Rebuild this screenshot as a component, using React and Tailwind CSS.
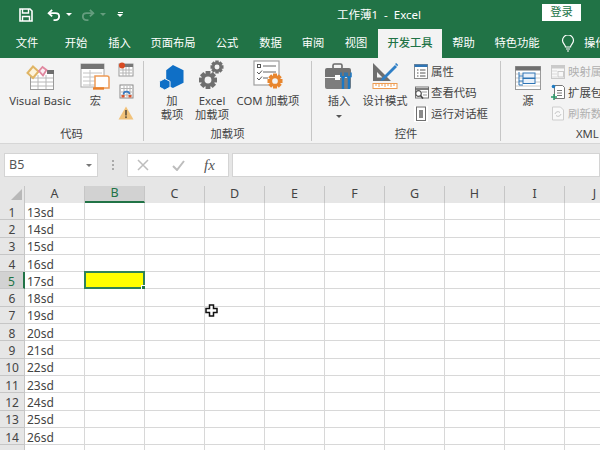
import React from "react";

const F = { fontFamily: '"Noto Sans","Noto Sans CJK SC",sans-serif' };

const Save = () => (
  <svg width="14" height="14" viewBox="0 0 14 14" fill="none" stroke="#fff" strokeWidth="1.6">
    <path d="M1 1h10l2 2v10H1z" />
    <path d="M3.5 1v4h6V1" strokeWidth="1.4" />
    <path d="M3.5 13V8.5h7V13" strokeWidth="1.4" />
  </svg>
);
const Undo = ({ o = 1, flip = false }) => (
  <svg width="14" height="14" viewBox="0 0 15 14" fill="none" stroke="#fff" strokeWidth="2" opacity={o} style={flip ? { transform: "scaleX(-1)" } : undefined}>
    <path d="M5.5 1.5 1.8 5l3.7 3.5" />
    <path d="M2 5h7c2.4 0 4 1.6 4 3.6S11.4 12.5 9 12.5H7" />
  </svg>
);
const Caret = ({ o = 1 }) => <div className="w-0 h-0 border-x-[3px] border-x-transparent border-t-[3px] border-t-white" style={{ opacity: o }} />;

const VB = () => (
  <svg width="28" height="25" viewBox="0 0 28 25">
    <rect x="4.500" y="5.500" width="23" height="19" fill="#fff" stroke="#9a9a9a" />
    <rect x="21" y="5" width="7" height="4" fill="#6e6e6e" />
    <path d="M5 13h22M5 17h22M5 21h22M12 10v14M20 10v14" stroke="#b8b8b8" />
    <path d="M1.500 8 7 1.500l5.500 5L7 13z" fill="#fdf3dc" stroke="#e0b565" strokeWidth="2" />
    <path d="M13 6l3.500-4 4 3-3.500 5.500z" fill="#fbeef2" stroke="#e0879f" strokeWidth="1.800" />
  </svg>
);
const Macro = () => (
  <svg width="32" height="27" viewBox="0 0 32 27">
    <rect x="1" y="1" width="23" height="23" fill="#fff" stroke="#a8a8a8" />
    <rect x="1" y="1" width="23" height="5" fill="#747474" />
    <path d="M3 10h19M3 14h19M3 18h19M3 22h15M10 7v16" stroke="#c4c4c4" />
    <path d="M15 13h12c1 0 2 1 2 2v10h-14z" fill="#fff" stroke="#ee9b55" strokeWidth="1.5" />
    <path d="M13 25.5h11" stroke="#e97f2a" strokeWidth="2.4" />
  </svg>
);
const RecMacro = () => (
  <svg width="16" height="15" viewBox="0 0 16 15">
    <rect x="1" y="2" width="14" height="12" fill="#fff" stroke="#9a9a9a" />
    <rect x="5" y="2" width="10" height="3" fill="#777" />
    <path d="M2 8h12M2 11h12M5 5v9M8 5v9M11 5v9" stroke="#b5b5b5" />
    <circle cx="4" cy="3.5" r="3" fill="#d84a22" />
  </svg>
);
const RefMacro = () => (
  <svg width="15" height="15" viewBox="0 0 15 15">
    <rect x="1" y="1" width="13" height="13" fill="#fff" stroke="#8a8a8a" />
    <path d="M2 4.500h11M2 8h11M2 11h11M5 2v11M8 2v11M11 2v11" stroke="#b5b5b5" />
    <path d="M4.500 10.500C4.500 7 10 6.500 10.500 10" fill="none" stroke="#3779c0" strokeWidth="1.6" />
    <rect x="2.500" y="11" width="3" height="2.500" fill="#d9552d" />
    <rect x="9.500" y="11" width="3" height="2.500" fill="#d9552d" />
  </svg>
);
const Warn = () => (
  <svg width="16" height="14" viewBox="0 0 16 14">
    <path d="M8 .5 15.500 13.500H.5z" fill="#f1c27a" />
    <rect x="7.100" y="4" width="1.800" height="5.500" fill="#6b5a42" />
    <rect x="7.100" y="10.300" width="1.800" height="1.800" fill="#6b5a42" />
  </svg>
);
const Addin = () => (
  <svg width="25" height="25" viewBox="0 0 26 26" style={{ marginRight: 2 }}>
    <path d="M14.500 0 25.500 5.500v13L14.500 24 7.500 20.500V5.500z" fill="#0f6fc6" />
    <path d="M6 14.200 11.500 17v6L6 26 .5 23v-6z" fill="#0f6fc6" stroke="#f3f3f3" strokeWidth="1" />
  </svg>
);
const Gear = ({ x, y, r, c, hole = "#f3f3f3" }) => {
  const teeth = [0, 45, 90, 135];
  return (
    <g transform={`translate(${x} ${y})`}>
      {teeth.map((a) => (
        <rect key={a} x={-r * 0.27} y={-r} width={r * 0.54} height={r * 2} fill={c} transform={`rotate(${a})`} />
      ))}
      <circle r={r * 0.76} fill={c} />
      <circle r={r * 0.38} fill={hole} />
    </g>
  );
};
const Gears = () => (
  <svg width="26" height="30" viewBox="0 0 26 30">
    <Gear x={18} y={7} r={6.5} c="#6f6f6f" />
    <Gear x={9} y={20} r={9} c="#6f6f6f" />
  </svg>
);
const Com = () => (
  <svg width="31" height="30" viewBox="0 0 31 30">
    <rect x="1" y="1" width="25" height="24" fill="#fff" stroke="#a0a0a0" strokeWidth="1.2" />
    <rect x="4.500" y="4.500" width="3" height="3" fill="none" stroke="#555" />
    <path d="M10 6h13M10 12h13M10 18h5" stroke="#666" />
    <path d="M4 12l2 2 3-3.500M4 18l2 2 3-3.500" fill="none" stroke="#555" />
    <Gear x={22} y={21} r={7.5} c="#e8862e" />
  </svg>
);
const Tool = () => (
  <svg width="30" height="27" viewBox="0 0 30 27">
    <rect x="9" y="1" width="9" height="5" rx="1.5" fill="none" stroke="#6b6b6b" strokeWidth="1.6" />
    <path d="M1 7a2 2 0 0 1 2-2h22a2 2 0 0 1 2 2v7H1z" fill="#737373" />
    <path d="M1 15h26v9a2 2 0 0 1-2 2H3a2 2 0 0 1-2-2z" fill="#7d7d7d" />
    <rect x="11" y="12" width="5" height="5" fill="#fff" />
    <path d="M19 13v13M25 13v13" stroke="#1b78c4" strokeWidth="2.4" />
    <path d="M17 9.500v4l2 1.500 2-1.500v-4M23 9.500v4l2 1.500 2-1.500v-4" fill="none" stroke="#1b78c4" strokeWidth="1.5" />
  </svg>
);
const Design = () => (
  <svg width="29" height="28" viewBox="1 0 29 28">
    <path d="M3 1v18h18zM7 10v5.500h5.500z" fill="#6e6e6e" fillRule="evenodd" />
    <path d="M12 16 25 3l2 2L14 18l-3.500 1z" fill="#2f7fc6" />
    <path d="M25 2l1.200-1 2 2-1 1.200z" fill="#2f7fc6" />
    <rect x="3" y="21.500" width="24" height="5" fill="#fff" stroke="#ee9b50" />
    <path d="M6 22v2M9 22v3M12 22v2M15 22v3M18 22v2M21 22v3M24 22v2" stroke="#ee9b50" />
  </svg>
);
const Prop = () => (
  <svg width="14" height="15" viewBox="0 0 14 15">
    <rect x=".5" y=".5" width="13" height="14" fill="#fff" stroke="#8a8a8a" />
    <rect x=".5" y=".5" width="13" height="2.500" fill="#2f75b5" />
    <path d="M3 6h1.500M6 6h5.500M3 9h1.500M6 9h5.500M3 12h1.500M6 12h5.500" stroke="#555" />
  </svg>
);
const ViewCode = () => (
  <svg width="15" height="14" viewBox="0 0 15 14">
    <rect x="1.500" y="1" width="13" height="11" fill="#fff" stroke="#777" />
    <path d="M1.500 3h13" stroke="#555" strokeWidth="1.500" />
    <path d="M8 6h5M9 9h4" stroke="#999" />
    <circle cx="4.500" cy="7.500" r="2.800" fill="#fff" stroke="#555" strokeWidth="1.200" />
    <path d="M6.500 9.500 9 12.500" stroke="#444" strokeWidth="1.500" />
  </svg>
);
const RunDlg = () => (
  <svg width="14" height="16" viewBox="0 0 14 16">
    <rect width="14" height="16" fill="#fff" />
    <rect x="2.500" y="1" width="9" height="13.500" fill="#fff" stroke="#6f6f6f" />
    <rect x="5" y="4" width="4" height="8" fill="#8a8a8a" />
  </svg>
);
const Source = () => (
  <svg width="26" height="24" viewBox="0 0 26 24">
    <rect x=".5" y=".5" width="25" height="23" fill="#fff" stroke="#9a9a9a" />
    <rect x=".5" y=".5" width="25" height="4" fill="#6f6f6f" />
    <path d="M1 8h24M1 12h24M1 16h24M1 20h24" stroke="#c8c8c8" />
    <path d="M4 6v13h4M4 10h4M4 15h4" fill="none" stroke="#2f75b5" />
    <rect x="8" y="7" width="12" height="5" fill="#e9f1fa" stroke="#2f75b5" />
    <rect x="8" y="12.500" width="12" height="5" fill="#e9f1fa" stroke="#2f75b5" />
  </svg>
);
const MapProp = () => (
  <svg width="14" height="14" viewBox="0 0 14 14" opacity=".45">
    <rect x=".5" y=".5" width="13" height="13" fill="#fff" stroke="#999" />
    <rect x=".5" y=".5" width="13" height="3" fill="#999" />
    <path d="M1 6h5M1 9h5M1 12h5" stroke="#bbb" />
    <rect x="7" y="6.500" width="5.500" height="5.500" fill="#fff" stroke="#999" />
  </svg>
);
const Expand = () => (
  <svg width="15" height="17" viewBox="0 0 15 17">
    <path d="M3.500 1.500h8l2 2v11h-10z" fill="#fff" stroke="#777" />
    <path d="M6 6.500h5M6 9h5M6 11.500h5" stroke="#777" />
    <circle cx="2.500" cy="2.500" r="1.800" fill="#1f7bc2" />
    <path d="M3 10v6M0 13h6" stroke="#2b9a6b" strokeWidth="1.500" />
  </svg>
);
const Refresh = () => (
  <svg width="14" height="15" viewBox="0 0 14 15" opacity=".5">
    <path d="M1.500 1h8l3 3v10h-11z" fill="#fff" stroke="#aaa" />
    <path d="M4 8a3 3 0 0 1 5-1.500M10 8a3 3 0 0 1-5 1.500" fill="none" stroke="#999" />
  </svg>
);
const Bulb = () => (
  <svg width="14" height="18" viewBox="0 0 14 18" fill="none" stroke="#fff" strokeWidth="1.200">
    <path d="M4.500 12c0-2-3-3.500-3-6.500a5.500 5.500 0 0 1 11 0c0 3-3 4.500-3 6.500z" />
    <path d="M5 14h4M6 16h2" />
  </svg>
);

const Tab = ({ w, children, active }) => (
  <div
    className={`flex items-center justify-center shrink-0 h-full text-[11.300px] ${active ? "bg-[#f3f3f3] text-[#217346] font-medium" : "text-white"}`}
    style={{ width: w }}
  >
    {children}
  </div>
);

const Big = ({ w, icon, children, h = 29 }) => (
  <div className="flex flex-col items-center shrink-0 text-[11.300px] leading-[14px] text-[#444] text-center" style={{ width: w }}>
    <div className="flex items-end justify-center mb-[4px]" style={{ height: h }}>{icon}</div>
    {children}
  </div>
);

const Group = ({ w, label, children }) => (
  <div className="flex flex-col shrink-0 h-[80px] border-r border-[#c6c6c6]" style={{ width: w }}>
    <div className="flex flex-1 min-h-0">{children}</div>
    <div className="text-[11.300px] leading-[14px] text-[#444] text-center">{label}</div>
  </div>
);

const SmallRow = ({ icon, children, muted }) => (
  <div className={`flex items-center gap-[2px] h-[21px] text-[11.400px] whitespace-nowrap ${muted ? "text-[#b0b0b0]" : "text-[#444]"}`}>
    <div className="w-[16px] flex justify-center shrink-0">{icon}</div>
    {children}
  </div>
);

const columns = ["A", "B", "C", "D", "E", "F", "G", "H", "I", "J"];
const rows = ["13sd", "14sd", "15sd", "16sd", "17sd", "18sd", "19sd", "20sd", "21sd", "22sd", "23sd", "24sd", "25sd", "26sd", ""];

export default function App() {
  return (
    <div className="relative w-[600px] h-[450px] overflow-hidden bg-[#e6e6e6] select-none" style={F}>
      {/* Title bar */}
      <div className="flex items-center h-[29px] bg-[#217346] text-white">
        <div className="ml-[19px] w-[28px] shrink-0"><Save /></div>
        <Undo />
        <div className="ml-[5px] mr-[9px]"><Caret /></div>
        <Undo o={0.3} flip />
        <div className="ml-[5px] mr-[11px]"><Caret o={0.3} /></div>
        <div className="flex flex-col items-center gap-[1px] w-[6px]">
          <div className="w-[5px] h-px bg-white" />
          <Caret />
        </div>
        <div className="ml-[214px] w-[205px] text-[11.500px] whitespace-nowrap">工作薄1 &nbsp;-&nbsp; Excel</div>
        <div className="flex items-center justify-center w-[39px] h-[17px] bg-white text-[#217346] text-[11.300px] -mt-[5px]">登录</div>
      </div>

      {/* Tabs */}
      <div className="flex items-center h-[29px] bg-[#217346] overflow-hidden">
        <Tab w={54}>文件</Tab>
        <Tab w={44}>开始</Tab>
        <Tab w={43}>插入</Tab>
        <Tab w={64}>页面布局</Tab>
        <Tab w={44}>公式</Tab>
        <Tab w={43}>数据</Tab>
        <Tab w={42}>审阅</Tab>
        <Tab w={44}>视图</Tab>
        <Tab w={64} active>开发工具</Tab>
        <Tab w={43}>帮助</Tab>
        <Tab w={64}>特色功能</Tab>
        <div className="ml-[12px] mr-[9px] shrink-0"><Bulb /></div>
        <div className="text-white text-[11.300px] whitespace-nowrap">操作</div>
      </div>

      {/* Ribbon */}
      <div className="flex items-start h-[86px] pt-[3px] bg-[#f3f3f3] border-b border-[#d6d6d6] overflow-hidden">
        <Group w={144} label="代码">
          <div className="w-[3px]" />
          <Big w={74} icon={<VB />}>Visual Basic</Big>
          <Big w={37} icon={<Macro />}>宏</Big>
          <div className="flex flex-col items-center justify-between w-[20px] h-[58px] ml-[2px] mt-[1px]">
            <RecMacro />
            <RefMacro />
            <Warn />
          </div>
        </Group>
        <Group w={168} label="加载项">
          <div className="w-[10px]" />
          <Big w={36} icon={<Addin />}>加<br />载项</Big>
          <Big w={44} icon={<Gears />}>Excel<br />加载项</Big>
          <Big w={68} icon={<Com />}>COM 加载项</Big>
        </Group>
        <Group w={189} label="控件">
          <div className="w-[10px]" />
          <Big w={34} icon={<Tool />}>
            插入
            <div className="mt-[7px] w-0 h-0 border-x-[3px] border-x-transparent border-t-[3px] border-t-[#555]" />
          </Big>
          <Big w={58} icon={<Design />}>设计模式</Big>
          <div className="-ml-[1px] flex flex-col">
            <SmallRow icon={<Prop />}>属性</SmallRow>
            <SmallRow icon={<ViewCode />}>查看代码</SmallRow>
            <SmallRow icon={<RunDlg />}>运行对话框</SmallRow>
          </div>
        </Group>
        <div className="flex flex-col shrink-0 w-[120px] h-[80px]">
          <div className="flex flex-1 min-h-0">
            <div className="w-[7px]" />
            <Big w={40} icon={<Source />}>源</Big>
            <div className="ml-[2px] flex flex-col">
              <SmallRow icon={<MapProp />} muted>映射属性</SmallRow>
              <SmallRow icon={<Expand />}>扩展包</SmallRow>
              <SmallRow icon={<Refresh />} muted>刷新数据</SmallRow>
            </div>
          </div>
          <div className="text-[11.300px] leading-[14px] text-[#444] pl-[75px]">XML</div>
        </div>
      </div>

      {/* Formula bar */}
      <div className="flex items-stretch h-[24px] mt-[9px] pl-[4px]">
        <div className="flex items-center justify-between w-[94px] pl-[4px] pr-[5px] bg-white border border-[#d4d4d4] text-[12.500px] text-[#555]">
          B5
          <div className="w-0 h-0 border-x-[3px] border-x-transparent border-t-[3px] border-t-[#777]" />
        </div>
        <div className="flex flex-col items-center justify-center gap-[2px] w-[29px]">
          <div className="w-[2px] h-[2px] bg-[#aaa]" />
          <div className="w-[2px] h-[2px] bg-[#aaa]" />
          <div className="w-[2px] h-[2px] bg-[#aaa]" />
        </div>
        <div className="flex items-center w-[102px] bg-white border border-[#d4d4d4]">
          <svg className="ml-[9px]" width="12" height="12" viewBox="0 0 12 12" stroke="#bdbdbd" strokeWidth="1.500"><path d="M1 1l10 10M11 1 1 11" /></svg>
          <svg className="ml-[23px]" width="13" height="11" viewBox="0 0 13 11" stroke="#bdbdbd" strokeWidth="2" fill="none"><path d="M1 6l4 4 7-9" /></svg>
          <div className="ml-[19px] text-[15px] italic text-[#555]" style={{ fontFamily: '"Liberation Serif",serif' }}>fx</div>
        </div>
        <div className="flex-1 ml-[3px] bg-white border border-[#d4d4d4]" />
      </div>

      {/* Sheet */}
      <div className="mt-[9px]">
        <div className="flex h-[17px] text-[12.500px] text-[#444]">
          <div className="relative w-[25px] shrink-0 border-r border-[#c6c6c6]">
            <div className="absolute right-[2px] bottom-[3px] w-0 h-0 border-l-[11px] border-l-transparent border-b-[11px] border-b-[#b8b8b8]" />
          </div>
          {columns.map((c) => (
            <div
              key={c}
              className={`flex items-center justify-center w-[60px] shrink-0 border-r ${c === "B" ? "bg-[#d2d2d2] text-[#217346] border-[#c6c6c6] border-b-2 border-b-[#217346]" : "border-[#c6c6c6]"}`}
            >
              {c}
            </div>
          ))}
        </div>
        {rows.map((r, i) => (
          <div key={i} className="flex h-[17.300px] bg-white text-[12px] text-[#444]">
            <div
              className={`flex items-center justify-center w-[25px] shrink-0 border-b pt-[3px] ${i === 4 ? "bg-[#d2d2d2] text-[#217346] border-r-2 border-r-[#217346] border-b-[#c6c6c6]" : "bg-[#e6e6e6] border-r border-r-[#c6c6c6] border-b-[#c6c6c6]"}`}
            >
              {i + 1}
            </div>
            {columns.map((c) => {
              const sel = i === 4 && c === "B";
              return (
                <div
                  key={c}
                  className={`relative flex items-center w-[60px] shrink-0 pl-[2px] pt-[3px] border-r border-b border-[#d8d8d8] ${sel ? "bg-[#ffff00]" : ""}`}
                >
                  {c === "A" ? r : ""}
                  {sel && (
                    <div className="absolute -left-[1px] -top-[1px] -right-[1px] -bottom-[1px] border-2 border-[#2f8259]">
                      <div className="absolute -right-[3px] -bottom-[3px] w-[5px] h-[5px] bg-[#217346] border border-white" />
                    </div>
                  )}
                </div>
              );
            })}
          </div>
        ))}
      </div>

      {/* Mouse cursor */}
      <svg className="absolute left-[205px] top-[304px]" width="13" height="13" viewBox="0 0 13 13">
        <path d="M4.500 1h4v3.500H12v4H8.500V12h-4V8.500H1v-4h3.500z" fill="#fff" stroke="#111" strokeWidth="1.500" />
      </svg>
    </div>
  );
}
